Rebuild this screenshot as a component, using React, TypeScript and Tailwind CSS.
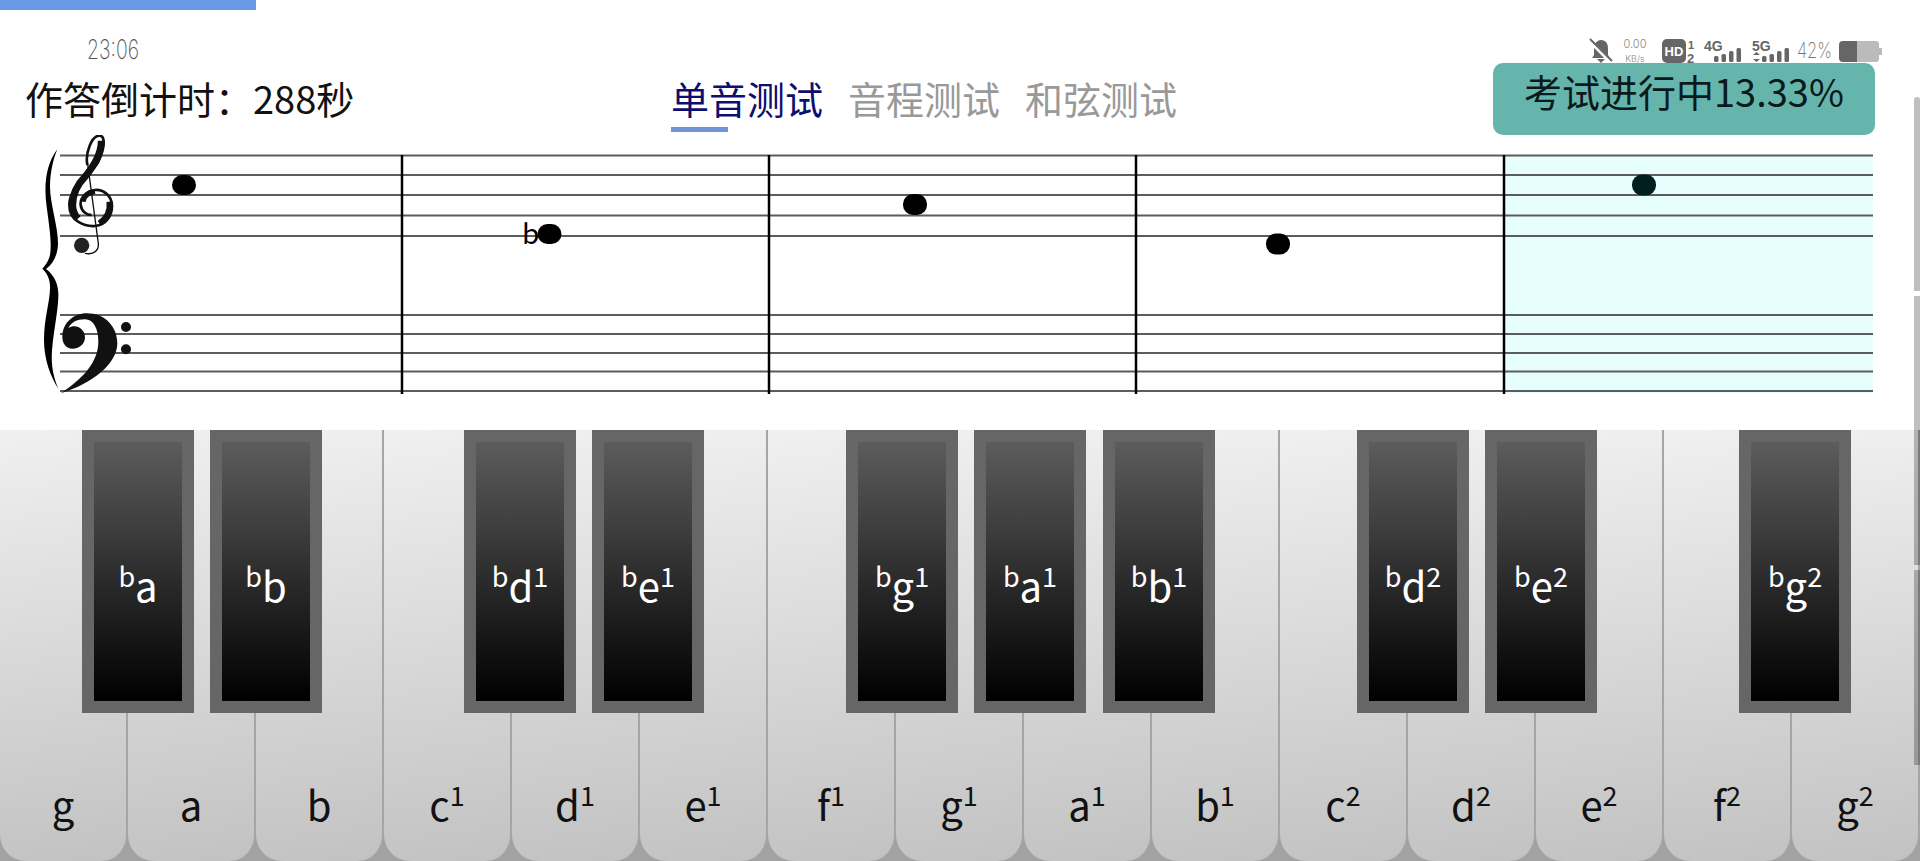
const whiteKeys = [
  { name: "g" },
  { name: "a" },
  { name: "b" },
  { name: "c", sup: "1" },
  { name: "d", sup: "1" },
  { name: "e", sup: "1" },
  { name: "f", sup: "1" },
  { name: "g", sup: "1" },
  { name: "a", sup: "1" },
  { name: "b", sup: "1" },
  { name: "c", sup: "2" },
  { name: "d", sup: "2" },
  { name: "e", sup: "2" },
  { name: "f", sup: "2" },
  { name: "g", sup: "2" },
];

const blackKeys = [
  { name: "a", left: "left-[82px]" },
  { name: "b", left: "left-[210px]" },
  { name: "d", sup: "1", left: "left-[464px]" },
  { name: "e", sup: "1", left: "left-[592px]" },
  { name: "g", sup: "1", left: "left-[846px]" },
  { name: "a", sup: "1", left: "left-[974px]" },
  { name: "b", sup: "1", left: "left-[1103px]" },
  { name: "d", sup: "2", left: "left-[1357px]" },
  { name: "e", sup: "2", left: "left-[1485px]" },
  { name: "g", sup: "2", left: "left-[1739px]" },
];

const staffLines = [155.5, 175, 195, 215.5, 236, 315, 334, 353, 371.5, 391];
const barLines = [402, 769, 1136, 1504];

function SignalBars({ x }: { x: number }) {
  return (
    <g fill="#666">
      <rect x={x} y="18" width="4.5" height="6" rx="1.5" />
      <rect x={x + 7.5} y="16" width="4.5" height="8" rx="1.5" />
      <rect x={x + 15} y="13" width="4.5" height="11" rx="1.5" />
      <rect x={x + 22.5} y="10" width="4.5" height="14" rx="1.5" />
    </g>
  );
}

function StatusIcons() {
  return (
    <svg width="293" height="32" viewBox="0 0 293 32" className="block">
      {/* muted bell */}
      <path d="M12 2c5 0 7 4 7 8v7l2 3H3l2-3v-7c0-4 3-8 7-8zM8 21h8l-4 4z" fill="#666" />
      <path d="M1 3l22 22" stroke="#fff" strokeWidth="4" />
      <path d="M1 1l22 22" stroke="#666" strokeWidth="2" />
      <text x="46" y="10" fontSize="11" fill="#888" textAnchor="middle" fontFamily="Inter, sans-serif" fontWeight="300">0.00</text>
      <text x="46" y="24" fontSize="9" fill="#888" textAnchor="middle" fontFamily="Inter, sans-serif" fontWeight="300">KB/s</text>
      <rect x="73" y="1" width="24" height="24" rx="5" fill="#666" />
      <text x="85" y="18" fontSize="13" fill="#fff" textAnchor="middle" fontFamily="'Liberation Sans', sans-serif" fontWeight="700">HD</text>
      <text x="99" y="11" fontSize="11" fill="#666" fontFamily="'Liberation Sans', sans-serif" fontWeight="700">1</text>
      <text x="98" y="25" fontSize="13" fill="#666" fontFamily="'Liberation Sans', sans-serif" fontWeight="700">2</text>
      <text x="115" y="13" fontSize="14" fill="#666" fontFamily="'Liberation Sans', sans-serif" fontWeight="700">4G</text>
      <SignalBars x={125} />
      <text x="163" y="13" fontSize="14" fill="#666" fontFamily="'Liberation Sans', sans-serif" fontWeight="700">5G</text>
      <path d="M164 17l3.5-3 3.500 3zM164 21l3.500 3 3.500-3z" fill="#666" />
      <SignalBars x={173} />
      <text x="208" y="20" fontSize="22" fill="#777" fontFamily="Inter, sans-serif" fontWeight="200" textLength="35" lengthAdjust="spacingAndGlyphs">42%</text>
      <path d="M268 3h19a3 3 0 0 1 3 3v15a3 3 0 0 1-3 3h-19z" fill="#bbb" />
      <path d="M290 10h3v7h-3z" fill="#bbb" />
      <path d="M268 3h-14a4 4 0 0 0-4 4v13a4 4 0 0 0 4 4h14z" fill="#666" />
    </svg>
  );
}

function Staff() {
  return (
    <svg width="1920" height="295" viewBox="0 135 1920 295" className="block">
      <rect x="1505" y="155" width="368" height="238" fill="#e6fefe" />
      {staffLines.map((y) => (
        <line key={y} x1="60" y1={y} x2="1873" y2={y} stroke="#5c5c5c" strokeWidth="2.2" />
      ))}
      {barLines.map((x) => (
        <line key={x} x1={x} y1="155" x2={x} y2="394" stroke="#000" strokeWidth="2.5" />
      ))}

      {/* brace and clefs, traced in 3x coordinates */}
      <g transform="translate(30 120) scale(0.3333)">
        <path
          d="M82 88C50 130 40 190 50 260C58 320 66 370 60 405C55 425 45 437 37 446C47 455 58 470 60 495C62 540 42 590 42 660C42 720 62 770 86 808C65 760 62 720 68 670C75 610 86 560 85 520C84 490 72 465 48 447C72 430 84 400 84 370C84 320 60 250 60 200C60 160 70 115 82 88Z"
          fill="#000"
        />
        <path d="M172 125L205 370C208 395 185 405 165 400" fill="none" stroke="#111" strokeWidth="4" />
        <path
          d="M172 135C165 100 185 45 210 47C228 50 222 90 205 125C185 165 118 195 118 255C118 305 165 320 195 318C230 315 246 285 246 258C246 225 218 208 195 210C170 212 150 232 152 255C155 275 170 285 185 285"
          fill="none"
          stroke="#111"
          strokeWidth="8"
        />
        <path d="M214 62C214 100 190 140 165 170C140 195 128 225 128 255C128 270 134 285 144 296" fill="none" stroke="#111" strokeWidth="21" />
        <path d="M238 245C241 270 230 295 208 310" fill="none" stroke="#111" strokeWidth="17" />
        <path d="M160 245C162 228 175 218 195 215" fill="none" stroke="#111" strokeWidth="14" />
        <circle cx="155" cy="376" r="23" fill="#222" />
        <path
          d="M97 650C97 610 130 580 170 580C225 580 262 620 262 670C262 730 190 790 92 820C160 775 205 725 205 665C205 625 190 598 165 598C140 598 122 608 115 625C135 610 165 625 165 652C165 675 145 686 128 686C108 686 97 670 97 650Z"
          fill="#111"
        />
        <circle cx="288" cy="621" r="15" fill="#111" />
        <circle cx="288" cy="688" r="15" fill="#111" />
      </g>

      <rect x="172" y="175" width="24" height="20" rx="10" fill="#000" />
      <text x="522" y="244" fontSize="28" fill="#000" fontFamily="'Noto Sans CJK SC', sans-serif">b</text>
      <rect x="537.5" y="224" width="24" height="20" rx="10" fill="#000" />
      <rect x="903" y="194" width="24" height="21" rx="10" fill="#000" />
      <rect x="1266" y="233.500" width="24" height="21" rx="10" fill="#000" />
      <rect x="1632" y="174.500" width="24" height="21" rx="10" fill="#021f1f" />
    </svg>
  );
}

export default function App() {
  return (
    <div className="relative flex h-[861px] w-[1920px] flex-col overflow-hidden bg-white font-['Noto_Sans_CJK_SC','Noto_Sans',sans-serif]">
      <div className="h-[10px] w-[256px] bg-[#6a98e8]" />

      {/* status bar */}
      <div className="flex h-[53px] items-start justify-between pt-[28px] pr-[38px] pl-[87px]">
        <span className="origin-left scale-x-[0.72] font-['Inter',sans-serif] text-[27px] leading-6 font-extralight text-[#555]">23:06</span>
        <StatusIcons />
      </div>

      {/* header */}
      <div className="flex h-[72px] items-start pl-[25px]">
        <div className="w-[646px] pt-[12px] text-[38px] leading-[46px] text-[#111]">作答倒计时：288秒</div>
        <div className="flex gap-[25px] pt-[12px] text-[38px] leading-[46px] text-[#999]">
          <div className="flex flex-col text-[#0e0e70]">
            单音测试
            <div className="mt-[6px] h-[5px] w-[57px] bg-[#6f94d8]" />
          </div>
          <div>音程测试</div>
          <div>和弦测试</div>
        </div>
        <div className="relative mr-[45px] ml-auto flex h-[72px] w-[382px] items-center justify-center rounded-[10px] bg-[#66b5ad] pb-[16px] text-[38px] leading-[46px] text-[#0a1a1a]">
          考试进行中13.33%
        </div>
      </div>

      <Staff />

      {/* keyboard */}
      <div className="relative flex flex-1 bg-[#a2a2a2]">
        {whiteKeys.map((key, i) => (
          <div
            key={i}
            className="flex w-[128px] shrink-0 items-end justify-center rounded-b-[26px] border-r-2 border-[#a5a5a5] bg-[linear-gradient(172deg,#f0f0f0,#c2c2c2)] pb-[32px] text-[40px] leading-[50px] text-[#111]"
          >
            <span>
              {key.name}
              {key.sup && <span className="align-[15px] text-[27px] leading-none">{key.sup}</span>}
            </span>
          </div>
        ))}

        {blackKeys.map((key) => (
          <div
            key={key.left}
            className={`absolute top-0 h-[283px] w-[112px] border-x-[12px] border-y-[12px] border-[#666] bg-[linear-gradient(#5c5c5c,#000)] ${key.left}`}
          >
            <div className="flex h-full items-center justify-center pt-[26px] text-[40px] leading-[50px] text-white">
              <span>
                <span className="align-[15px] text-[27px] leading-none">b</span>
                {key.name}
                {key.sup && <span className="align-[15px] text-[27px] leading-none">{key.sup}</span>}
              </span>
            </div>
          </div>
        ))}
      </div>

      {/* scroll thumbs at the right edge */}
      <div className="absolute top-[97px] right-0 h-[194px] w-[6px] rounded-t-[3px] bg-black/25" />
      <div className="absolute top-[296px] right-0 h-[269px] w-[6px] bg-black/25" />
      <div className="absolute top-[570px] right-0 h-[195px] w-[6px] bg-black/25" />
    </div>
  );
}
